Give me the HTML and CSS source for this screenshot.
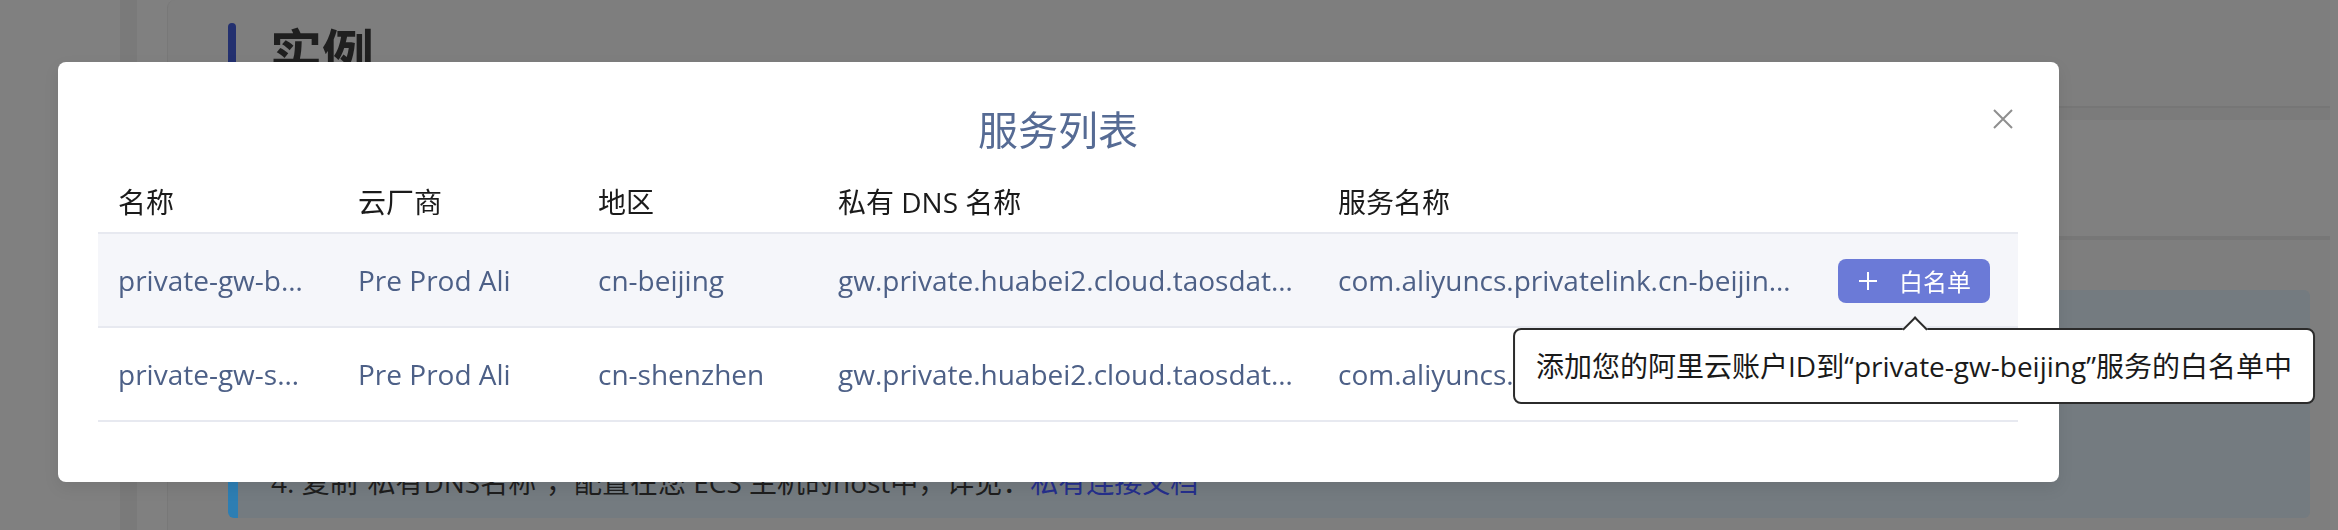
FILE: index.html
```html
<!DOCTYPE html>
<html lang="zh-CN">
<head>
<meta charset="utf-8">
<title>服务列表</title>
<link rel="stylesheet" href="styles.css">
</head>
<body>
<div class="page">
  <aside class="sidebar"></aside>
  <div class="sidebar-edge"></div>
  <div class="gutter"></div>
  <main class="content">
    <div class="heading">
      <span class="heading-bar"></span>
      <h1 class="heading-text">实例</h1>
    </div>
    <div class="tabs"></div>
    <div class="panel"></div>
    <div class="notice">
      <p class="notice-line">4. 复制“私有DNS名称”，配置在您 ECS 主机的host中，详见：<a class="notice-link">私有连接文档</a></p>
    </div>
  </main>
</div>

<div class="modal">
  <button class="close" aria-label="关闭">
    <svg width="20" height="20" viewBox="0 0 20 20"><path d="M1 1L19 19M19 1L1 19" stroke="#8f8f8f" stroke-width="2" fill="none"/></svg>
  </button>
  <h2 class="modal-title">服务列表</h2>
  <table class="table">
    <colgroup>
      <col class="col-s"><col class="col-s"><col class="col-s"><col class="col-l"><col class="col-l"><col>
    </colgroup>
    <thead>
      <tr>
        <th>名称</th>
        <th>云厂商</th>
        <th>地区</th>
        <th>私有 DNS 名称</th>
        <th>服务名称</th>
        <th></th>
      </tr>
    </thead>
    <tbody>
      <tr class="row-active">
        <td class="cell">private-gw-beijing</td>
        <td class="cell">Pre Prod Ali</td>
        <td class="cell">cn-beijing</td>
        <td class="cell">gw.private.huabei2.cloud.taosdata.com</td>
        <td class="cell">com.aliyuncs.privatelink.cn-beijing.epsrv-2ze8b1r0y3k7</td>
        <td class="action">
          <span class="whitelist">
            <button class="btn">
              <svg width="20" height="20" viewBox="0 0 20 20"><path d="M10 1V19M1 10H19" stroke="#ffffff" stroke-width="2" fill="none"/></svg>
              <span>白名单</span>
            </button>
            <span class="tooltip">添加您的阿里云账户ID到“private-gw-beijing”服务的白名单中</span>
          </span>
        </td>
      </tr>
      <tr>
        <td class="cell">private-gw-shenzhen</td>
        <td class="cell">Pre Prod Ali</td>
        <td class="cell">cn-shenzhen</td>
        <td class="cell">gw.private.huabei2.cloud.taosdata.com</td>
        <td class="cell">com.aliyuncs.privatelink.cn-shenzhen.epsrv-wz9c4m2q8d1x</td>
        <td class="action"></td>
      </tr>
    </tbody>
  </table>
</div>
</body>
</html>
```

FILE: styles.css
```css
* { box-sizing: border-box; }

html, body {
  margin: 0;
  padding: 0;
}

body {
  width: 2338px;
  height: 530px;
  overflow: hidden;
  background: #808080;
  font-family: "Open Sans", "Noto Sans CJK SC", sans-serif;
  color: #1a1a1a;
}

/* dimmed background page */
.page {
  display: flex;
  height: 530px;
}

.sidebar {
  width: 120px;
  background: #808080;
}

.sidebar-edge {
  width: 17px;
  background: #7a7a7a;
}

.gutter {
  width: 30px;
  background: #808080;
}

.content {
  flex: 1;
  margin-right: 8px;
  background: #7e7e7e;
  border-left: 1px solid #787878;
  border-top-left-radius: 8px;
  padding: 23px 0 0 60px;
}

.heading {
  display: flex;
  align-items: flex-start;
  gap: 34px;
  height: 56px;
}

.heading-bar {
  width: 8px;
  height: 56px;
  border-radius: 4px;
  background: #23306f;
}

.heading-text {
  margin: 0;
  font-family: "Noto Sans CJK SC", sans-serif;
  font-size: 52px;
  line-height: 56px;
  font-weight: 700;
  color: #1f1f1f;
}

.tabs {
  margin: 27px 0 0 -60px;
  height: 14px;
  border-top: 2px solid #767676;
  background: #7b7b7b;
}

.panel {
  margin-left: -60px;
  height: 120px;
  background: #808080;
  border-bottom: 4px solid #777777;
}

.notice {
  margin: 50px 20px 0 0;
  height: 228px;
  padding: 172px 0 0 33px;
  background: #747b80;
  border-left: 10px solid #2d7eb3;
  border-radius: 6px;
}

.notice-line {
  margin: 0;
  font-family: "Open Sans", "Noto Sans CJK SC", sans-serif;
  font-size: 28px;
  line-height: 40px;
  color: #1e1e1e;
}

.notice-link {
  color: #252f8c;
}

/* modal */
.modal {
  position: fixed;
  left: 58px;
  top: 62px;
  width: 2001px;
  height: 420px;
  padding: 38px 41px 0 40px;
  background: #ffffff;
  border-radius: 8px;
  box-shadow: 0 6px 16px rgba(0, 0, 0, 0.08);
}

.close {
  position: absolute;
  top: 47px;
  right: 46px;
  width: 20px;
  height: 20px;
  padding: 0;
  border: none;
  background: none;
  display: flex;
}

.modal-title {
  margin: 0;
  text-align: center;
  font-family: "Noto Sans CJK SC", sans-serif;
  font-size: 40px;
  line-height: 56px;
  font-weight: 400;
  color: #566b94;
}

.table {
  margin-top: 16px;
  width: 1920px;
  table-layout: fixed;
  border-collapse: collapse;
  border-spacing: 0;
}

.col-s { width: 240px; }
.col-l { width: 500px; }

.table th {
  height: 61px;
  padding: 0 22px 0 20px;
  text-align: left;
  font-size: 28px;
  font-weight: 400;
  line-height: 40px;
  color: #1b1b1b;
  border-bottom: 2px solid #e7e9f0;
  white-space: nowrap;
}

.table td {
  height: 94px;
  padding: 0 22px 0 20px;
  font-size: 28px;
  line-height: 40px;
  color: #4d6087;
  border-bottom: 2px solid #e7e9f0;
  vertical-align: middle;
}

.cell {
  white-space: nowrap;
  overflow: hidden;
  text-overflow: ellipsis;
}

.row-active td {
  background: #f5f6fa;
}

.whitelist {
  position: relative;
  display: inline-block;
  vertical-align: middle;
}

.btn {
  display: inline-flex;
  align-items: center;
  gap: 21px;
  height: 44px;
  padding: 0 19px 0 20px;
  border: none;
  border-radius: 8px;
  background: #6b7ad7;
  color: #ffffff;
  font-family: "Noto Sans CJK SC", sans-serif;
  font-size: 24px;
  line-height: 44px;
}

.tooltip {
  position: absolute;
  z-index: 10;
  top: calc(100% + 25px);
  left: 50%;
  transform: translateX(-50%);
  white-space: nowrap;
  padding: 16px 21px;
  font-size: 28px;
  line-height: 40px;
  color: #1a1a1a;
  background: #ffffff;
  border: 2px solid #2b2b2b;
  border-radius: 8px;
}

.tooltip::before {
  content: "";
  position: absolute;
  top: -10px;
  left: 50%;
  width: 16px;
  height: 16px;
  margin-left: -8px;
  background: #ffffff;
  border-top: 2px solid #2b2b2b;
  border-left: 2px solid #2b2b2b;
  transform: rotate(45deg);
}
```
